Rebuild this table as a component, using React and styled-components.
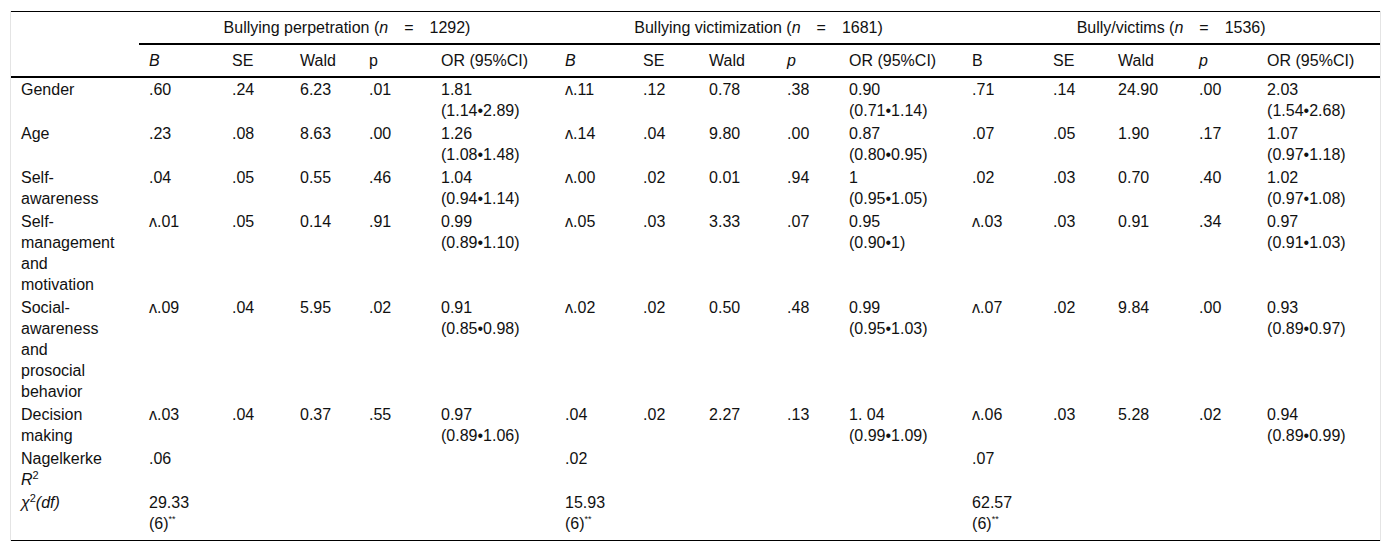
import React from 'react';
import styled, { createGlobalStyle } from 'styled-components';

const GlobalStyle = createGlobalStyle`
  body {
    margin: 0;
    background: #fff;
    font-family: "Liberation Sans", Arial, sans-serif;
    color: #111;
  }
`;

const widths = [128, 83, 68, 69, 72, 124, 78, 66, 78, 62, 123, 81, 65, 81, 68, 123];

const groups = [
  { title: 'Bullying perpetration', n: '1292', heads: [['B', true], ['SE'], ['Wald'], ['p'], ['OR (95%CI)']] },
  { title: 'Bullying victimization', n: '1681', heads: [['B', true], ['SE'], ['Wald'], ['p', true], ['OR (95%CI)']] },
  { title: 'Bully/victims', n: '1536', heads: [['B'], ['SE'], ['Wald'], ['p', true], ['OR (95%CI)']] },
];

const rows = [
  {
    label: 'Gender',
    cells: [
      ['.60', '.24', '6.23', '.01', '1.81', '(1.14•2.89)'],
      ['ʌ.11', '.12', '0.78', '.38', '0.90', '(0.71•1.14)'],
      ['.71', '.14', '24.90', '.00', '2.03', '(1.54•2.68)'],
    ],
  },
  {
    label: 'Age',
    cells: [
      ['.23', '.08', '8.63', '.00', '1.26', '(1.08•1.48)'],
      ['ʌ.14', '.04', '9.80', '.00', '0.87', '(0.80•0.95)'],
      ['.07', '.05', '1.90', '.17', '1.07', '(0.97•1.18)'],
    ],
  },
  {
    label: 'Self-awareness',
    cells: [
      ['.04', '.05', '0.55', '.46', '1.04', '(0.94•1.14)'],
      ['ʌ.00', '.02', '0.01', '.94', '1', '(0.95•1.05)'],
      ['.02', '.03', '0.70', '.40', '1.02', '(0.97•1.08)'],
    ],
  },
  {
    label: 'Self-management and motivation',
    cells: [
      ['ʌ.01', '.05', '0.14', '.91', '0.99', '(0.89•1.10)'],
      ['ʌ.05', '.03', '3.33', '.07', '0.95', '(0.90•1)'],
      ['ʌ.03', '.03', '0.91', '.34', '0.97', '(0.91•1.03)'],
    ],
  },
  {
    label: 'Social-awareness and prosocial behavior',
    cells: [
      ['ʌ.09', '.04', '5.95', '.02', '0.91', '(0.85•0.98)'],
      ['ʌ.02', '.02', '0.50', '.48', '0.99', '(0.95•1.03)'],
      ['ʌ.07', '.02', '9.84', '.00', '0.93', '(0.89•0.97)'],
    ],
  },
  {
    label: 'Decision making',
    cells: [
      ['ʌ.03', '.04', '0.37', '.55', '0.97', '(0.89•1.06)'],
      ['.04', '.02', '2.27', '.13', '1. 04', '(0.99•1.09)'],
      ['ʌ.06', '.03', '5.28', '.02', '0.94', '(0.89•0.99)'],
    ],
  },
];

const Frame = styled.div`
  margin: 11px 0 0 10px;
  width: 1369px;
  border-left: 1px solid #e4e4e4;
  border-right: 1px solid #e4e4e4;
`;

const Table = styled.table`
  width: 1369px;
  border-collapse: collapse;
  table-layout: fixed;
  border-top: 1px solid #000;
  border-bottom: 1px solid #000;
  font-size: 16px;
  line-height: 21px;
`;

const Col = styled.col`
  width: ${(p) => p.$w}px;
`;

const GroupHead = styled.th`
  padding: 5px 10px;
  font-weight: normal;
  text-align: center;
  border-bottom: ${(p) => (p.$blank ? 'none' : '2px solid #000')};
`;

const ColHead = styled.th`
  padding: 5px 10px;
  font-weight: normal;
  text-align: left;
  font-style: ${(p) => (p.$italic ? 'italic' : 'normal')};
  border-bottom: 2px solid #000;
`;

const Eq = styled.span`
  margin: 0 16px;
`;

const Row = styled.tr`
  & > td {
    padding-top: 1px;
    padding-bottom: ${(p) => (p.$last ? '6px' : '1px')};
  }
`;

const Label = styled.td`
  padding-left: 10px;
  padding-right: 23.8px;
  vertical-align: top;
  text-align: left;
`;

const Cell = styled.td`
  padding-left: 10px;
  padding-right: 10px;
  vertical-align: top;
  text-align: left;
  white-space: ${(p) => (p.$nowrap ? 'nowrap' : 'normal')};
`;

const Ci = styled.span`
  display: block;
  white-space: nowrap;
`;

const Sup = styled.sup`
  font-size: ${(p) => (p.$tiny ? '9px' : '11px')};
  line-height: 0;
  vertical-align: ${(p) => (p.$tiny ? '7px' : '6px')};
`;

const Chi = ({ v }) => (
  <>
    {v} (6)<Sup $tiny>**</Sup>
  </>
);

export default function App() {
  return (
    <>
      <GlobalStyle />
      <Frame>
        <Table>
          <colgroup>
            {widths.map((w, i) => (
              <Col key={i} $w={w} />
            ))}
          </colgroup>
          <thead>
            <tr>
              <GroupHead $blank />
              {groups.map((g) => (
                <GroupHead key={g.title} colSpan={5}>
                  {g.title} (<i>n</i>
                  <Eq>=</Eq>
                  {g.n})
                </GroupHead>
              ))}
            </tr>
            <tr>
              <ColHead />
              {groups.map((g) =>
                g.heads.map(([h, it], i) => (
                  <ColHead key={g.title + i} $italic={it}>
                    {h}
                  </ColHead>
                ))
              )}
            </tr>
          </thead>
          <tbody>
            {rows.map((r) => (
              <Row key={r.label}>
                <Label>{r.label}</Label>
                {r.cells.map((c, gi) => (
                  <React.Fragment key={gi}>
                    <Cell $nowrap>{c[0]}</Cell>
                    <Cell>{c[1]}</Cell>
                    <Cell>{c[2]}</Cell>
                    <Cell>{c[3]}</Cell>
                    <Cell>
                      {c[4]}
                      <Ci>{c[5]}</Ci>
                    </Cell>
                  </React.Fragment>
                ))}
              </Row>
            ))}
            <Row>
              <Label>
                Nagelkerke <i>R</i>
                <Sup>2</Sup>
              </Label>
              {['.06', '.02', '.07'].map((v) => (
                <React.Fragment key={v}>
                  <Cell>{v}</Cell>
                  <Cell />
                  <Cell />
                  <Cell />
                  <Cell />
                </React.Fragment>
              ))}
            </Row>
            <Row $last>
              <Label>
                <i>χ</i>
                <Sup>2</Sup>
                <i>(df)</i>
              </Label>
              {['29.33', '15.93', '62.57'].map((v) => (
                <React.Fragment key={v}>
                  <Cell>
                    <Chi v={v} />
                  </Cell>
                  <Cell />
                  <Cell />
                  <Cell />
                  <Cell />
                </React.Fragment>
              ))}
            </Row>
          </tbody>
        </Table>
      </Frame>
    </>
  );
}
